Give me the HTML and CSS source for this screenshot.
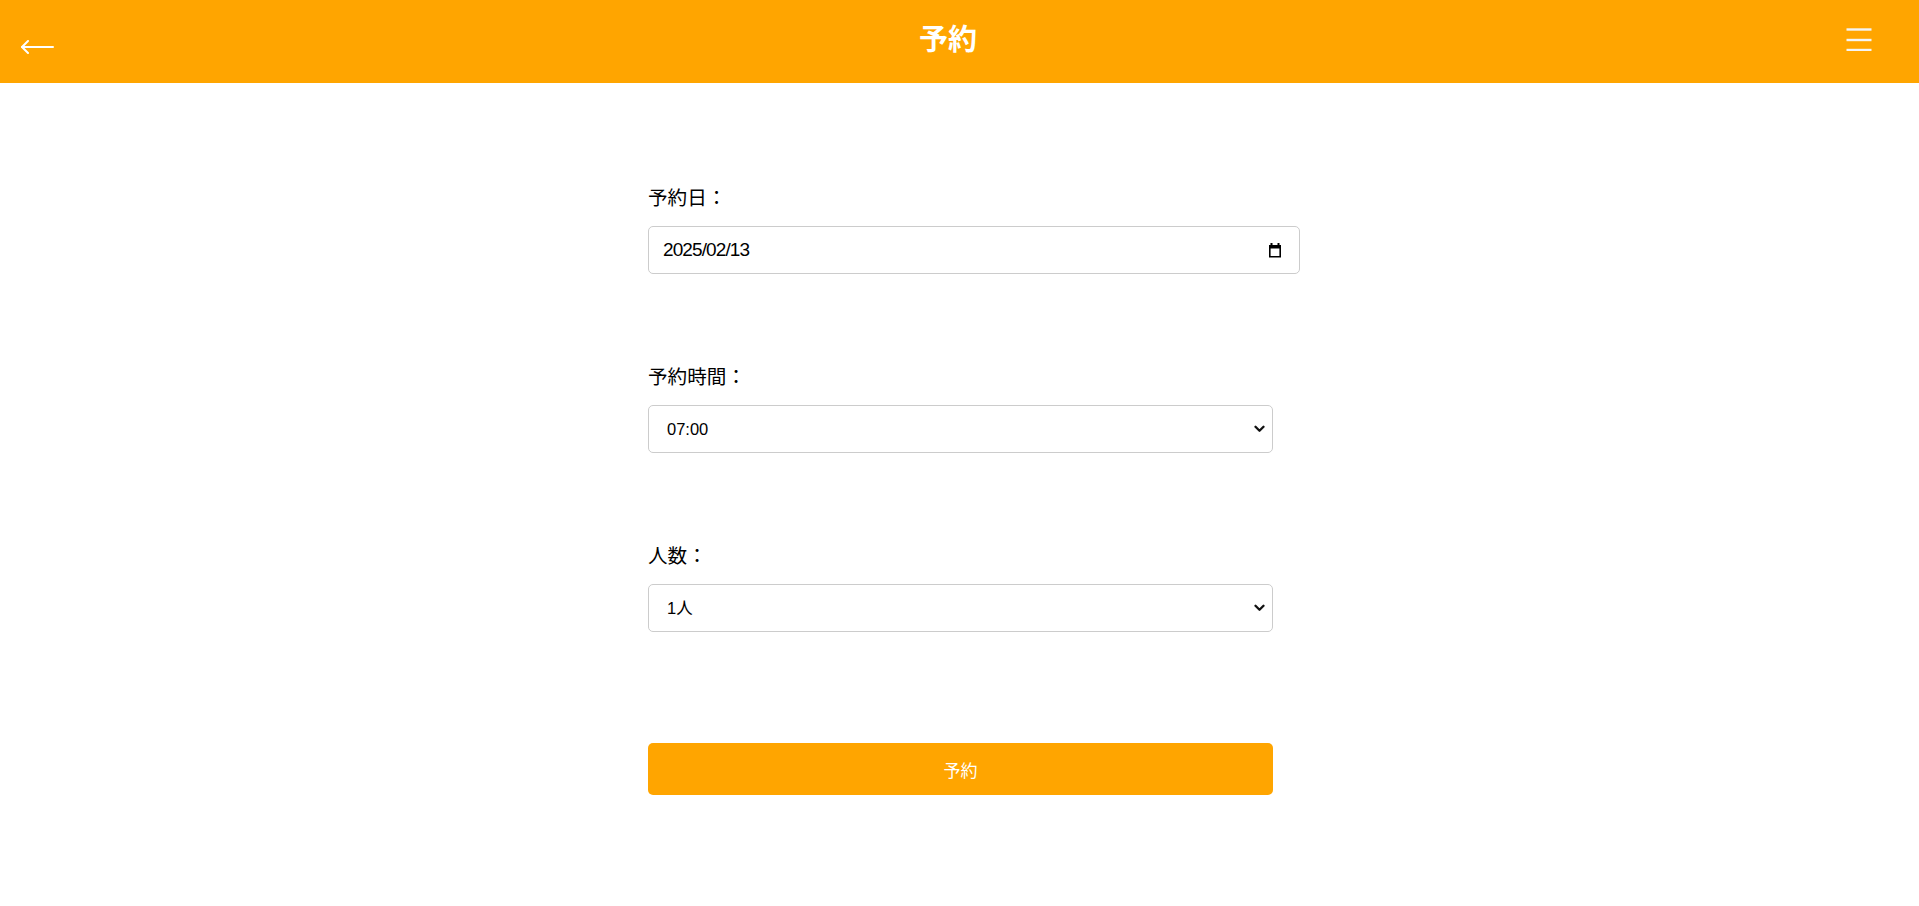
FILE: index.html
```html
<!DOCTYPE html>
<html lang="ja">
<head>
<meta charset="utf-8">
<title>予約</title>
<link rel="stylesheet" href="styles.css">
</head>
<body>
<header class="topbar">
  <a class="back" href="#" aria-label="戻る">
    <svg width="34" height="14" viewBox="0 0 34 14" fill="none" stroke="#ffffff" stroke-width="2" stroke-linecap="round" stroke-linejoin="round">
      <path d="M2 7H33"/>
      <path d="M8 1L2 7L8 13"/>
    </svg>
  </a>
  <h1 class="title">予約</h1>
  <button class="menu" type="button" aria-label="メニュー">
    <svg width="26" height="24" viewBox="0 0 26 24" fill="none" stroke="#f4f4f4" stroke-width="2.4">
      <path d="M0.5 2.5H25.5"/>
      <path d="M0.5 13H25.5"/>
      <path d="M0.5 23H25.5"/>
    </svg>
  </button>
</header>

<main class="main">
  <form class="form">
    <div class="group">
      <label class="label">予約日：</label>
      <div class="date-field">
        <span class="date-value">2025/02/13</span>
        <svg class="cal" width="14" height="15" viewBox="0 0 14 15" fill="#000">
          <rect x="2.5" y="0" width="2" height="3"/>
          <rect x="9.5" y="0" width="2" height="3"/>
          <path fill-rule="evenodd" d="M1 2H13V14.5H1Z M2.6 5.6V12.9H11.4V5.6Z"/>
        </svg>
      </div>
    </div>

    <div class="group">
      <label class="label">予約時間：</label>
      <div class="select-wrap">
        <select class="select">
          <option>07:00</option>
          <option>08:00</option>
          <option>09:00</option>
        </select>
        <svg class="chevron" width="11" height="8" viewBox="0 0 11 8" fill="none" stroke="#111" stroke-width="2.3" stroke-linecap="round" stroke-linejoin="round">
          <path d="M1.5 1.8L5.5 5.8L9.5 1.8"/>
        </svg>
      </div>
    </div>

    <div class="group group-last">
      <label class="label">人数：</label>
      <div class="select-wrap">
        <select class="select">
          <option>1人</option>
          <option>2人</option>
          <option>3人</option>
        </select>
        <svg class="chevron" width="11" height="8" viewBox="0 0 11 8" fill="none" stroke="#111" stroke-width="2.3" stroke-linecap="round" stroke-linejoin="round">
          <path d="M1.5 1.8L5.5 5.8L9.5 1.8"/>
        </svg>
      </div>
    </div>

    <button class="submit" type="button">予約</button>
  </form>
</main>
</body>
</html>
```

FILE: styles.css
```css
* {
  box-sizing: border-box;
}

html, body {
  margin: 0;
  padding: 0;
  background: #ffffff;
}

body {
  font-family: "Noto Sans CJK JP", "Liberation Sans", sans-serif;
  font-size: 16px;
  color: #000000;
}

.topbar {
  height: 83px;
  background: #ffa500;
  display: flex;
  align-items: center;
  justify-content: space-between;
  padding: 0 20px;
}

.back {
  width: 34px;
  display: flex;
  align-items: center;
  padding-top: 11px;
}

.back svg {
  display: block;
}

.title {
  margin: 0;
  color: #ffffff;
  font-size: 29px;
  font-weight: 700;
  line-height: 40px;
  margin-top: -10px;
  margin-left: -4px;
}

.menu {
  width: 53px;
  padding: 0;
  margin: 0;
  border: 0;
  background: transparent;
  display: flex;
  justify-content: flex-start;
  margin-top: -6px;
}

.menu svg {
  display: block;
}

.main {
  display: flex;
  justify-content: center;
  padding-top: 102px;
  padding-left: 2px;
}

.form {
  width: 625px;
  display: flex;
  flex-direction: column;
}

.group {
  display: flex;
  flex-direction: column;
  margin-bottom: 89px;
}

.group-last {
  margin-bottom: 111px;
}

.label {
  display: block;
  font-size: 19.6px;
  line-height: 25px;
  margin-bottom: 17px;
}

.group:first-child .label {
  margin-top: -1px;
}

.date-field {
  width: 652px;
  height: 48px;
  border: 1px solid #cccccc;
  border-radius: 5px;
  display: flex;
  align-items: center;
  justify-content: space-between;
  padding: 0 17px 0 14px;
  background: #ffffff;
}

.date-value {
  font-family: "Liberation Sans", sans-serif;
  font-size: 19px;
  letter-spacing: -0.9px;
}

.cal {
  display: block;
}

.select-wrap {
  position: relative;
}

.select {
  display: block;
  width: 100%;
  height: 48px;
  border: 1px solid #cccccc;
  border-radius: 5px;
  padding: 0 30px 0 18px;
  background: #ffffff;
  color: #000000;
  font-family: "Liberation Sans", "Noto Sans CJK JP", sans-serif;
  font-size: 16.5px;
  appearance: none;
  -webkit-appearance: none;
}

.chevron {
  position: absolute;
  right: 8px;
  top: 20px;
  pointer-events: none;
}

.submit {
  width: 100%;
  height: 52px;
  border: 0;
  border-radius: 5px;
  background: #ffa500;
  color: #ffffff;
  font-family: "Noto Sans CJK JP", sans-serif;
  font-size: 17px;
  padding: 0;
}
```
